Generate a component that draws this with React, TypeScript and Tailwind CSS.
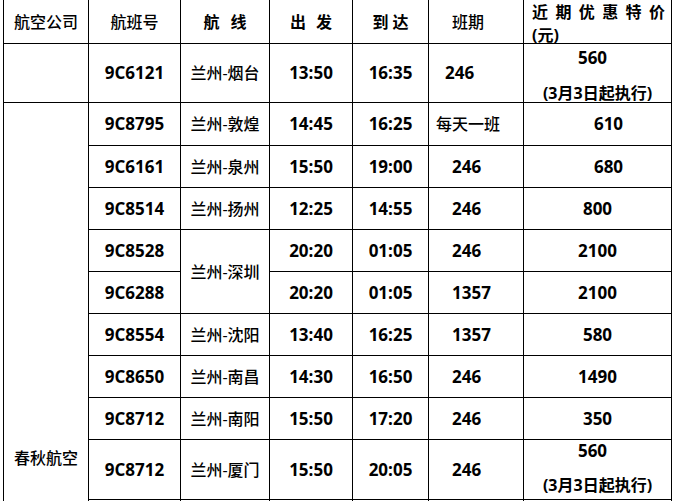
import React from "react";

const FONT = { fontFamily: "'Open Sans', 'Noto Sans CJK SC', sans-serif" };

function C({
  children,
  className = "",
}: {
  children?: React.ReactNode;
  className?: string;
}) {
  return (
    <div className={`bg-white flex items-center justify-center text-[16px] leading-[22px] text-black ${className}`}>
      {children}
    </div>
  );
}

function Num({ children, className = "" }: { children: React.ReactNode; className?: string }) {
  return <span className={`font-bold text-[17px] ${className}`}>{children}</span>;
}

function Route({ children }: { children: React.ReactNode }) {
  return <span className="font-medium">{children}</span>;
}

type Row = {
  no: string;
  route?: string;
  dep: string;
  arr: string;
  sched: string;
  price: string;
  priceCls?: string;
};

const rows: Row[] = [
  { no: "9C8795", route: "兰州-敦煌", dep: "14:45", arr: "16:25", sched: "每天一班", price: "610", priceCls: "pl-[22px]" },
  { no: "9C6161", route: "兰州-泉州", dep: "15:50", arr: "19:00", sched: "246", price: "680", priceCls: "pl-[22px]" },
  { no: "9C8514", route: "兰州-扬州", dep: "12:25", arr: "14:55", sched: "246", price: "800" },
  { no: "9C8528", route: "兰州-深圳", dep: "20:20", arr: "01:05", sched: "246", price: "2100" },
  { no: "9C6288", dep: "20:20", arr: "01:05", sched: "1357", price: "2100" },
  { no: "9C8554", route: "兰州-沈阳", dep: "13:40", arr: "16:25", sched: "1357", price: "580" },
  { no: "9C8650", route: "兰州-南昌", dep: "14:30", arr: "16:50", sched: "246", price: "1490" },
  { no: "9C8712", route: "兰州-南阳", dep: "15:50", arr: "17:20", sched: "246", price: "350" },
];

export default function App() {
  return (
    <div className="w-[675px] h-[501px] overflow-hidden bg-white pl-[3px]" style={FONT}>
      <div className="w-fit bg-black px-px pb-px grid gap-px grid-cols-[84px_91px_88px_82px_75px_94px_147px] grid-rows-[43px_58px_42px_41px_41px_41px_41px_41px_41px_41px_59px_40px]">
        {/* header */}
        <C className="font-medium">航空公司</C>
        <C className="font-medium">航班号</C>
        <C className="font-bold gap-[11px]">
          <span>航</span>
          <span>线</span>
        </C>
        <C className="font-bold gap-[10px]">
          <span>出</span>
          <span>发</span>
        </C>
        <C className="font-bold gap-[4px]">
          <span>到</span>
          <span>达</span>
        </C>
        <C className="font-medium justify-start pl-[23px]">班期</C>
        <div className="bg-white flex flex-col justify-start pl-[8px] pt-[1px] text-[16px] leading-[23px] font-bold text-black">
          <span className="tracking-[7.4px] whitespace-nowrap">近期优惠特价</span>
          <span>(元)</span>
        </div>

        {/* row 1 */}
        <C />
        <C>
          <Num>9C6121</Num>
        </C>
        <C>
          <Route>兰州-烟台</Route>
        </C>
        <C>
          <Num>13:50</Num>
        </C>
        <C>
          <Num>16:35</Num>
        </C>
        <C className="justify-start pl-[16px]">
          <Num>246</Num>
        </C>
        <div className="bg-white flex flex-col items-center justify-between pt-[5px] pb-0 leading-[18px] text-black text-[16px] font-bold">
          <span className="text-[17px] pr-[10px]">560</span>
          <span>(3月3日起执行)</span>
        </div>

        {/* airline merged */}
        <div className="bg-white row-span-10 flex justify-center items-start pt-[344px] text-[16px] leading-[22px] font-medium text-black">
          春秋航空
        </div>

        {rows.map((r, i) => (
          <React.Fragment key={i}>
            <C>
              <Num>{r.no}</Num>
            </C>
            {r.route === "兰州-深圳" ? (
              <C className="row-span-2">
                <Route>{r.route}</Route>
              </C>
            ) : r.route ? (
              <C>
                <Route>{r.route}</Route>
              </C>
            ) : null}
            <C>
              <Num>{r.dep}</Num>
            </C>
            <C>
              <Num>{r.arr}</Num>
            </C>
            {r.sched === "每天一班" ? (
              <C className="justify-start pl-[7px]">
                <span className="font-medium">{r.sched}</span>
              </C>
            ) : (
              <C className="justify-start pl-[23px]">
                <Num>{r.sched}</Num>
              </C>
            )}
            <C className={r.priceCls ?? ""}>
              <Num>{r.price}</Num>
            </C>
          </React.Fragment>
        ))}

        {/* last visible row */}
        <C>
          <Num>9C8712</Num>
        </C>
        <C>
          <Route>兰州-厦门</Route>
        </C>
        <C>
          <Num>15:50</Num>
        </C>
        <C>
          <Num>20:05</Num>
        </C>
        <C className="justify-start pl-[23px]">
          <Num>246</Num>
        </C>
        <div className="bg-white flex flex-col items-center justify-between pt-[2px] pb-[5px] leading-[18px] text-black text-[16px] font-bold">
          <span className="text-[17px] pr-[10px]">560</span>
          <span>(3月3日起执行)</span>
        </div>

        {/* continuation row */}
        <C />
        <C />
        <C />
        <C />
        <C />
        <C />
      </div>
    </div>
  );
}
